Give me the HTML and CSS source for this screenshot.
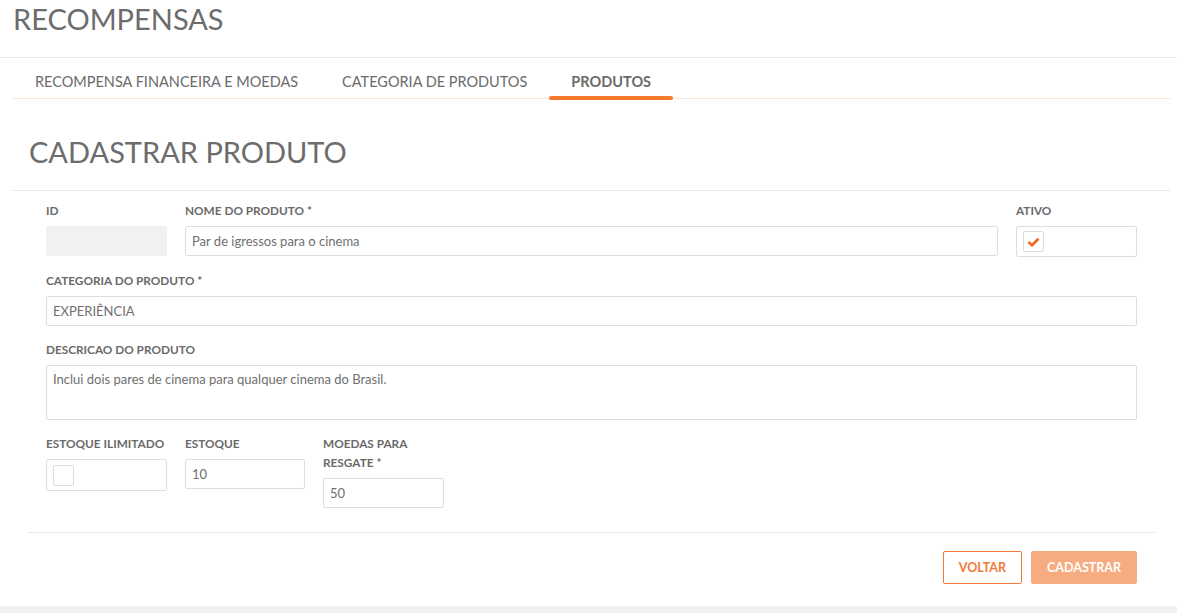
FILE: index.html
```html
<!DOCTYPE html>
<html lang="pt-BR">
<head>
    <meta charset="UTF-8">
    <meta name="viewport" content="width=device-width, initial-scale=1.0">
    <title>Recompensas</title>
    <link rel="stylesheet" href="styles.css">
</head>
<body>
    <div class="page-title">RECOMPENSAS</div>

    <div class="tabs">
        <a class="tab">RECOMPENSA FINANCEIRA E MOEDAS</a>
        <a class="tab">CATEGORIA DE PRODUTOS</a>
        <a class="tab active">PRODUTOS</a>
    </div>

    <div class="card">
        <div class="card-header">CADASTRAR PRODUTO</div>

        <form class="form">
            <div class="row">
                <div class="group small">
                    <label>ID</label>
                    <div class="input disabled"></div>
                </div>
                <div class="group grow">
                    <label>NOME DO PRODUTO *</label>
                    <div class="input">Par de igressos para o cinema</div>
                </div>
                <div class="group small">
                    <label>ATIVO</label>
                    <div class="input check-wrap">
                        <span class="checkbox">
                            <svg width="13" height="10" viewBox="0 0 13 10">
                                <path d="M1.5 5 L5 8.2 L11.5 1.8" fill="none" stroke="#f26b21" stroke-width="2.8" stroke-linejoin="miter"/>
                            </svg>
                        </span>
                    </div>
                </div>
            </div>

            <div class="group">
                <label>CATEGORIA DO PRODUTO *</label>
                <div class="input">EXPERIÊNCIA</div>
            </div>

            <div class="group">
                <label>DESCRICAO DO PRODUTO</label>
                <div class="input textarea">Inclui dois pares de cinema para qualquer cinema do Brasil.</div>
            </div>

            <div class="row">
                <div class="group small">
                    <label>ESTOQUE ILIMITADO</label>
                    <div class="input check-wrap tall">
                        <span class="checkbox"></span>
                    </div>
                </div>
                <div class="group small narrow">
                    <label>ESTOQUE</label>
                    <div class="input">10</div>
                </div>
                <div class="group small">
                    <label>MOEDAS PARA<br>RESGATE *</label>
                    <div class="input">50</div>
                </div>
            </div>
        </form>

        <div class="card-footer">
            <button class="btn btn-outline" type="button">VOLTAR</button>
            <button class="btn btn-primary" type="button">CADASTRAR</button>
        </div>
    </div>

    <div class="bottom-bar"></div>
</body>
</html>
```

FILE: styles.css
```css
body {
    margin: 0;
    background: #fff;
    font-family: 'Lato', 'Open Sans', sans-serif;
    color: #666;
}
.page-title {
    height: 57px;
    padding: 0 13px;
    font-size: 29px;
    line-height: 38px;
    color: #6c6c6c;
    border-bottom: 1px solid #e6e6e6;
}
.tabs {
    display: flex;
    margin: 0 7px 0 13px;
    height: 40px;
    border-bottom: 1px solid #fde4d4;
}
.tab {
    position: relative;
    padding: 0 22px;
    font-size: 14.5px;
    line-height: 48px;
    color: #6b6b6b;
}
.tab.active {
    font-weight: bold;
}
.tab.active:after {
    content: '';
    position: absolute;
    left: 0;
    right: 0;
    bottom: -2px;
    height: 4px;
    border-radius: 2px;
    background: #f47a30;
}
.card {
    margin: 0 7px 0 13px;
}
.card-header {
    height: 91px;
    padding: 0 16px;
    font-size: 29px;
    line-height: 106px;
    color: #6c6c6c;
    border-bottom: 1px solid #e6e6e6;
}
.form {
    padding: 10px 33px 10px;
}
.row {
    display: flex;
    gap: 18px;
}
.group {
    margin-bottom: 14px;
}
.group.small {
    width: 121px;
}
.group.small.narrow {
    width: 120px;
}
.group.grow {
    flex: 1;
}
label {
    display: block;
    margin-bottom: 6px;
    font-size: 11.8px;
    font-weight: bold;
    line-height: 19px;
    color: #6a6a6a;
}
.input {
    box-sizing: border-box;
    height: 30px;
    padding: 0 6px;
    border: 1px solid #dedede;
    border-radius: 2px;
    font-size: 13px;
    line-height: 28px;
    color: #6f6f6f;
}
.input.disabled {
    background: #f1f1f1;
    border-color: #f1f1f1;
}
.input.textarea {
    height: 55px;
    line-height: 26px;
}
.check-wrap {
    display: flex;
    align-items: center;
    height: 31px;
}
.check-wrap.tall {
    height: 32px;
}
.checkbox {
    box-sizing: border-box;
    display: flex;
    align-items: center;
    justify-content: center;
    width: 21px;
    height: 21px;
    border: 1px solid #dcdcdc;
    border-radius: 2px;
    background: #fff;
}
.card-footer {
    display: flex;
    justify-content: flex-end;
    gap: 9px;
    margin: 0 15px;
    padding: 18px 18px 22px 0;
    border-top: 1px solid #e6e6e6;
}
.btn {
    height: 33px;
    padding: 0 15px;
    border-radius: 2px;
    font-family: inherit;
    font-size: 12.5px;
    font-weight: bold;
    cursor: pointer;
}
.btn-outline {
    border: 1px solid #f07a36;
    background: #fff;
    color: #f07a36;
}
.btn-primary {
    border: 1px solid #f6ab80;
    background: #f6ab80;
    color: #fff;
}
.bottom-bar {
    height: 8px;
    background: #f2f2f2;
}
```
